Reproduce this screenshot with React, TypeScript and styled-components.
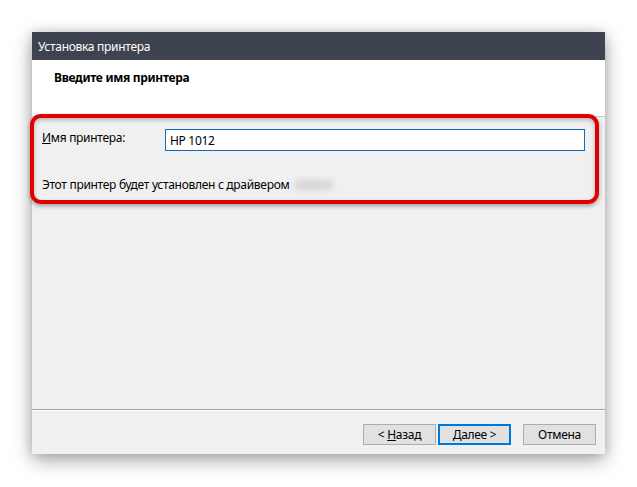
import React from "react";
import styled, { createGlobalStyle } from "styled-components";

const Global = createGlobalStyle`
  html, body { margin: 0; padding: 0; background: #ffffff; }
  body { font-family: "Segoe UI", "Noto Sans", "Liberation Sans", sans-serif; letter-spacing: -0.3px; }
`;

const Page = styled.div`
  width: 637px;
  height: 487px;
  padding: 32px 0 0 32px;
  box-sizing: border-box;
`;

const Window = styled.div`
  position: relative;
  width: 573px;
  height: 422px;
  display: flex;
  flex-direction: column;
  background: #f0f0f0;
  box-shadow: 0 6px 18px rgba(0, 0, 0, 0.35), 0 0 10px rgba(0, 0, 0, 0.12);
`;

const TitleBar = styled.div`
  height: 28px;
  background: #3e4350;
  color: #ffffff;
  display: flex;
  align-items: center;
  padding-left: 6px;
  font-size: 12px;
`;

const Header = styled.div`
  height: 57px;
  background: #ffffff;
  border-bottom: 1px solid #c8c8c8;
  box-sizing: border-box;
  padding: 9px 0 0 22px;
  font-size: 12px;
  font-weight: bold;
  color: #000;
`;

const Content = styled.div`
  flex: 1;
  display: flex;
  flex-direction: column;
  padding: 12px 20px 0 10px;
  font-size: 12px;
  color: #000;
`;

const FieldRow = styled.div`
  display: flex;
  align-items: flex-start;
`;

const Label = styled.label`
  width: 123px;
  padding-top: 1px;
  line-height: 16px;
`;

const Input = styled.div`
  flex: 1;
  height: 22px;
  box-sizing: border-box;
  border: 1px solid #0f6cbd;
  background: #fff;
  padding: 0 4px;
  display: flex;
  align-items: center;
`;

const Note = styled.div`
  margin-top: 26px;
  display: flex;
  align-items: center;
  line-height: 16px;
`;

const Blurred = styled.span`
  display: inline-block;
  width: 40px;
  height: 12px;
  margin-left: 5px;
  border-radius: 6px;
  background: #dadada;
  filter: blur(2.5px);
`;

const Footer = styled.div`
  height: 45px;
  border-top: 1px solid #a0a0a0;
  box-shadow: inset 0 1px 0 #ffffff;
  box-sizing: border-box;
  display: flex;
  justify-content: flex-end;
  align-items: flex-start;
  padding: 14px 9px 0 0;
  gap: 2px;
`;

const Button = styled.button<{ $primary?: boolean; $gapLeft?: boolean }>`
  width: 73px;
  height: 21px;
  box-sizing: border-box;
  margin-left: ${(p) => (p.$gapLeft ? "10px" : "0")};
  background: #e1e1e1;
  border: ${(p) => (p.$primary ? "2px solid #0078d7" : "1px solid #adadad")};
  font-family: "Segoe UI", "Noto Sans", "Liberation Sans", sans-serif;
  letter-spacing: -0.3px;
  font-size: 12px;
  color: #000;
  padding: 0;
  display: flex;
  align-items: center;
  justify-content: center;
`;

const U = styled.span`
  text-decoration: underline;
`;

const Highlight = styled.div`
  position: absolute;
  left: -2px;
  top: 82px;
  width: 569px;
  height: 90px;
  box-sizing: border-box;
  border: 4px solid #e00000;
  border-radius: 11px;
  box-shadow: 0 2px 4px rgba(0, 0, 0, 0.35), inset 0 2px 4px rgba(0, 0, 0, 0.25);
  pointer-events: none;
`;

export default function App() {
  return (
    <>
      <Global />
      <Page>
        <Window>
          <TitleBar>Установка принтера</TitleBar>
          <Header>Введите имя принтера</Header>
          <Content>
            <FieldRow>
              <Label>
                <U>И</U>мя принтера:
              </Label>
              <Input>HP 1012</Input>
            </FieldRow>
            <Note>
              Этот принтер будет установлен с драйвером
              <Blurred />
            </Note>
          </Content>
          <Footer>
            <Button>
              &lt;&nbsp;<U>Н</U>азад
            </Button>
            <Button $primary>
              <U>Д</U>алее &gt;
            </Button>
            <Button $gapLeft>Отмена</Button>
          </Footer>
          <Highlight />
        </Window>
      </Page>
    </>
  );
}
